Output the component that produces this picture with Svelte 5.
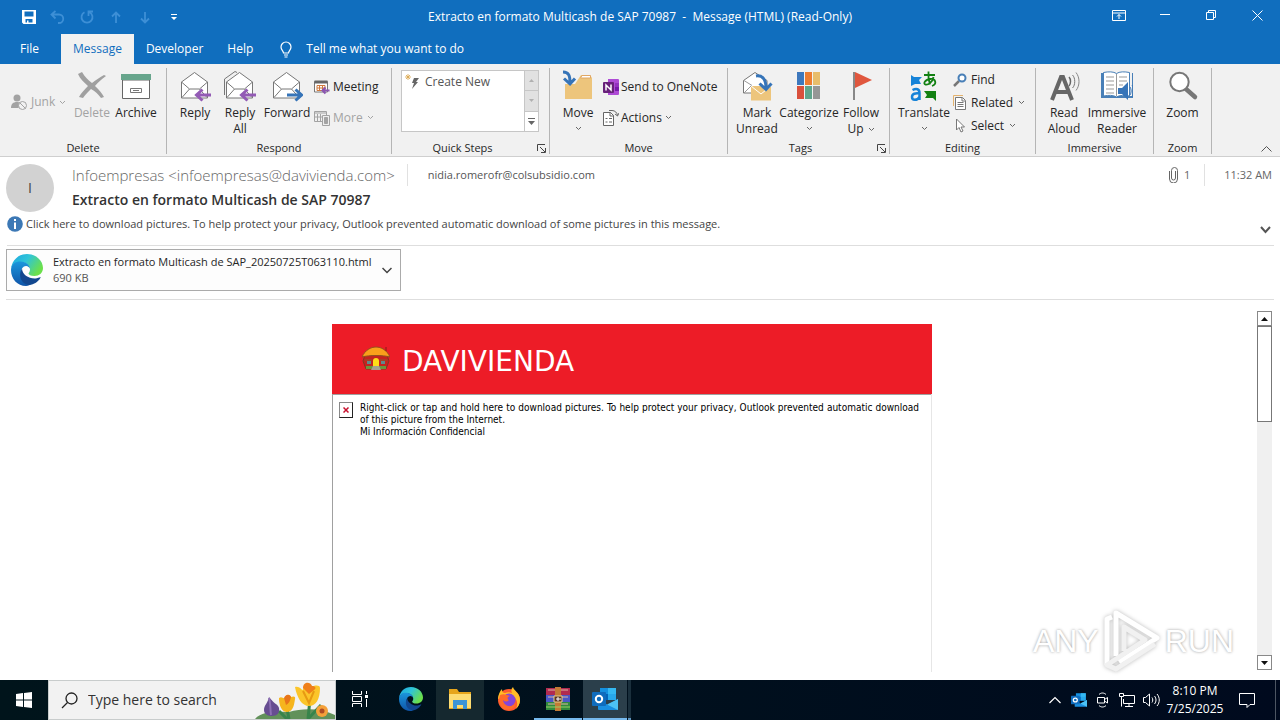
<script lang="ts">
	const tabs = ['File', 'Message', 'Developer', 'Help'];
	let activeTab = 'Message';
	let search = '';

	const subject = 'Extracto en formato Multicash de SAP 70987';
	const swatches = ['#3d78bd', '#ed7d31', '#e8bd6b', '#d9503c', '#5fa58c', '#969696'];
</script>

{#snippet caret()}
	<svg class="caret" width="7" height="5" viewBox="0 0 7 5" fill="none" stroke="currentColor">
		<path d="M1 1l2.500 2.500L6 1" />
	</svg>
{/snippet}

{#snippet envelope()}
	<path d="M2.500 28V12L15.500 2.500 28.500 12v16z" fill="#fff" stroke="#777" />
	<path d="M2.500 12l8 7h10l8-7M3 27.500l7.500-8.500M28 27.500L20.500 19" fill="none" stroke="#777" />
{/snippet}

{#snippet launcher()}
	<button class="launcher" aria-label="More options">
		<svg width="9" height="9" viewBox="0 0 9 9" fill="none" stroke="#444">
			<path d="M.5 7V.5H8M3 3l5 5M8.500 4v4.500H4" />
		</svg>
	</button>
{/snippet}

{#snippet edge(size, id)}
	<svg width={size} height={size} viewBox="0 0 32 32">
		<defs>
			<linearGradient id="{id}a" x1="0" y1="0" x2="1" y2=".5">
				<stop offset="0" stop-color="#1ba5e0" />
				<stop offset=".5" stop-color="#2fc4d8" />
				<stop offset="1" stop-color="#6be04b" />
			</linearGradient>
			<linearGradient id="{id}b" x1="0" y1="0" x2="0" y2="1">
				<stop offset="0" stop-color="#1b96dc" />
				<stop offset="1" stop-color="#0f54a8" />
			</linearGradient>
		</defs>
		<path d="M0 15C1 6 7.500 0 16 0c9.500 0 16 7 16 14 0 5-4 8-8.500 8-4 0-6-1.500-6-2.500 0-.8 1.500-1.500 1.500-4C19 11 14 8 10 8 5 8 1 11 0 15z" fill="url(#{id}a)" />
		<path d="M0 16C0 10 4.500 7.500 9.500 7.500c5 0 9 3 9.500 7-.5-1-2-2.500-4-2.500-3 0-5 3-5 7 0 6 5.500 10.500 11 10.500-2 1.500-3.500 2.500-6 2.500C6.500 32 0 25 0 16z" fill="url(#{id}b)" />
		<path d="M11 14.500c0 6 7 10.500 13.500 10 2-.2 3.500-1 5-1.500.7.6-3 6-8.500 7.500C13 33 5.500 24 11 14.500z" fill="#12478f" />
	</svg>
{/snippet}

{#snippet outlook(size)}
	<svg width={size} height={size} viewBox="0 0 26 26">
		<path d="M8 2h16v12H8z" fill="#1490df" />
		<path d="M16 2h8v6h-8z" fill="#35b8f1" />
		<path d="M8 8h8v6H8z" fill="#0364b8" />
		<path d="M16 8h8v6h-8z" fill="#28a8ea" />
		<path d="M6 13l10 6 10-6v10a1 1 0 0 1-1 1H7a1 1 0 0 1-1-1z" fill="#1a8fe0" />
		<path d="M26 13v11L15 18.500z" fill="#4cc2f5" />
		<rect y="6" width="14" height="14" rx="1" fill="#0f6cbd" />
		<circle cx="7" cy="13" r="3.200" fill="none" stroke="#fff" stroke-width="2" />
	</svg>
{/snippet}

<div class="window">
	<header>
		<div class="titlebar">
			<div class="quick-access">
				<button aria-label="Save">
					<svg width="14" height="14" viewBox="0 0 14 14">
						<path d="M0 0h14v14H1.500L0 12.500zM2.500 1.500v5h9v-5zM3.500 9v3.500H5V10.500h1.500v2h4V9z" fill="#fff" fill-rule="evenodd" />
					</svg>
				</button>
				<button class="faded" aria-label="Undo">
					<svg width="15" height="14" viewBox="0 0 15 14" fill="none" stroke="currentColor" stroke-width="1.800">
						<path d="M5.500 1L1.500 4.500l4 4M2 4.500h7a4.200 4.200 0 0 1 0 8.500H8" />
					</svg>
				</button>
				<button class="faded" aria-label="Redo">
					<svg width="14" height="14" viewBox="0 0 14 14" fill="none" stroke="currentColor" stroke-width="1.800">
						<path d="M4.500 2.200a5.500 5.500 0 1 0 5 0M8.500 6V1.500H13" />
					</svg>
				</button>
				<button class="faded" aria-label="Previous item">
					<svg width="10" height="13" viewBox="0 0 10 13" fill="none" stroke="currentColor" stroke-width="1.800">
						<path d="M5 12V2M1 5.500l4-4 4 4" />
					</svg>
				</button>
				<button class="faded" aria-label="Next item">
					<svg width="10" height="13" viewBox="0 0 10 13" fill="none" stroke="currentColor" stroke-width="1.800">
						<path d="M5 1v10M1 7.500l4 4 4-4" />
					</svg>
				</button>
				<button aria-label="Customize toolbar">
					<svg width="6" height="6" viewBox="0 0 6 6"><path d="M0 0h6v1H0zM0 3h6L3 6z" fill="#fff" /></svg>
				</button>
			</div>
			<h1>{subject}&nbsp; -&nbsp; Message (HTML) (Read-Only)</h1>
			<div class="window-controls">
				<button aria-label="Ribbon display options">
					<svg width="14" height="11" viewBox="0 0 14 11" fill="none" stroke="#fff">
						<path d="M.5.5h13v10H.5zM.5 3h13M7 9V4.500M5 6.500l2-2 2 2" />
					</svg>
				</button>
				<button aria-label="Minimize">
					<svg width="10" height="10" viewBox="0 0 10 10" stroke="#fff"><path d="M0 4.500h10" /></svg>
				</button>
				<button aria-label="Restore">
					<svg width="10" height="10" viewBox="0 0 10 10" fill="none" stroke="#fff">
						<path d="M.5 2.500h7v7h-7zM2.500 2V.5h7v7H8" />
					</svg>
				</button>
				<button aria-label="Close">
					<svg width="11" height="11" viewBox="0 0 11 11" stroke="#fff"><path d="M.5.5l10 10M10.500.5l-10 10" /></svg>
				</button>
			</div>
		</div>
		<nav>
			{#each tabs as tab}
				<button class="tab" class:active={tab === activeTab} on:click={() => (activeTab = tab)}>{tab}</button>
			{/each}
			<button class="tell-me">
				<svg width="12" height="17" viewBox="0 0 12 17" fill="none" stroke="#fff" stroke-width="1.200">
					<path d="M3.500 12c0-2-2.500-3-2.500-6a5 5 0 0 1 10 0c0 3-2.500 4-2.500 6zM4 14h4M4.500 16h3" />
				</svg>
				Tell me what you want to do
			</button>
		</nav>
	</header>

	<div class="ribbon">
		<section class="group delete">
			<div class="tools">
				<div class="stack">
					<button class="small" disabled>
						<svg width="17" height="17" viewBox="0 0 17 17">
							<circle cx="6" cy="4" r="3.500" fill="#a3a3a3" />
							<path d="M0 14c0-4 2-6 6-6 1.500 0 3 .5 4 1.500L7.500 14z" fill="#a3a3a3" />
							<circle cx="11.500" cy="11.500" r="4" fill="#f1f1f1" stroke="#a3a3a3" />
							<path d="M8.500 8.500l6 6" stroke="#a3a3a3" />
						</svg>
						Junk {@render caret()}
					</button>
				</div>
				<button class="big" disabled>
					<svg width="32" height="32" viewBox="0 0 32 32" fill="#a0a0a0">
						<path d="M2 4l4-2c3 5 6 8 10 11 4-3 8-6 12-8l2 1c-4 3-8 6-11 10 4 4 7 7 9 11l-3 1c-3-4-6-7-10-9-3 3-6 6-8 9l-4-1c2-4 6-8 9-11C8 12 4 9 2 4z" />
					</svg>
					Delete
				</button>
				<button class="big">
					<svg width="32" height="32" viewBox="0 0 32 32">
						<path d="M2.500 10h27v18.500h-27z" fill="#fff" stroke="#666" />
						<path d="M1 4h30v6H1z" fill="#67a58c" />
						<path d="M10.500 18.500h11v4h-11zM13 20.500h6" fill="none" stroke="#777" />
					</svg>
					Archive
				</button>
			</div>
			<footer><h2>Delete</h2></footer>
		</section>

		<section class="group respond">
			<div class="tools">
				<button class="big">
					<svg width="32" height="32" viewBox="0 0 32 32">
						{@render envelope()}
						<path d="M32 25H18M23.500 19.500L17.500 25l6 5.500" fill="none" stroke="#935bb5" stroke-width="3" />
					</svg>
					Reply
				</button>
				<button class="big">
					<svg width="32" height="32" viewBox="0 0 32 32">
						<path d="M.5 25V9L11 1.500l2 1" fill="none" stroke="#777" />
						{@render envelope()}
						<path d="M32 25H18M23.500 19.500L17.500 25l6 5.500" fill="none" stroke="#935bb5" stroke-width="3" />
					</svg>
					Reply<br />All
				</button>
				<button class="big">
					<svg width="32" height="32" viewBox="0 0 32 32">
						{@render envelope()}
						<path d="M16 25h14M24.500 19.500l6 5.500-6 5.500" fill="none" stroke="#3674b8" stroke-width="3" />
					</svg>
					Forward
				</button>
				<div class="stack">
					<button class="small">
						<svg width="16" height="16" viewBox="0 0 16 16" fill="none">
							<path d="M.5 2.500h13V13H.5z" fill="#fff" stroke="#777" />
							<path d="M.5 1.500h13v3H.5z" fill="#666" />
							<path d="M3 6.500h8v5H3zM5.500 6v6M8.500 6v6M3 9h8" stroke="#d0793c" />
							<path d="M15.500 11.500H9M11.500 8.500l-3 3 3 3" stroke="#8b55b0" stroke-width="2" />
						</svg>
						Meeting
					</button>
					<button class="small" disabled>
						<svg width="16" height="16" viewBox="0 0 16 16" fill="none" stroke="#a3a3a3">
							<path d="M.5 1.500h12v10H.5zM.5 3h12M3.500 4v7M6.500 4v7M1 7h7" />
							<path d="M8.500 5.500h7v10h-7z" fill="#eee" />
							<path d="M10.500 7.500h3v6h-3z" fill="#a3a3a3" />
						</svg>
						More {@render caret()}
					</button>
				</div>
			</div>
			<footer><h2>Respond</h2></footer>
		</section>

		<section class="group steps">
			<div class="gallery">
				<button class="step">
					<svg width="16" height="16" viewBox="0 0 16 16">
						<path d="M9 4h5l-3 4h2l-6 7 2-6H7z" fill="#666" />
						<path d="M3 0v6M0 3h6M1 1l4 4M5 1L1 5" stroke="#d9a348" stroke-width=".8" />
					</svg>
					Create New
				</button>
				<div class="spinner">
					<button disabled aria-label="Scroll up">
						<svg width="5" height="3" viewBox="0 0 5 3"><path d="M0 3l2.500-3L5 3z" fill="#b0b0b0" /></svg>
					</button>
					<button disabled aria-label="Scroll down">
						<svg width="5" height="3" viewBox="0 0 5 3"><path d="M0 0l2.500 3L5 0z" fill="#b0b0b0" /></svg>
					</button>
					<button aria-label="More quick steps">
						<svg width="7" height="7" viewBox="0 0 7 7"><path d="M0 0h7v1H0zM0 3h7L3.500 7z" fill="#666" /></svg>
					</button>
				</div>
			</div>
			<footer><h2>Quick Steps</h2>{@render launcher()}</footer>
		</section>

		<section class="group move">
			<div class="tools">
				<button class="big">
					<svg width="32" height="32" viewBox="0 0 32 32">
						<path d="M3 14h10l6-9h9l2 3v21H3z" fill="#edc57c" />
						<path d="M20 5.500h8.500v2.500H18.500z" fill="#fff" stroke="#e0a765" />
						<path d="M1 2c6 0 7 4 7 11M2 8.500L8 14l5-5.500" fill="none" stroke="#3674b8" stroke-width="3" />
					</svg>
					Move {@render caret()}
				</button>
				<div class="stack">
					<button class="small">
						<svg width="16" height="16" viewBox="0 0 16 16">
							<path d="M5 0h10a1 1 0 0 1 1 1v14a1 1 0 0 1-1 1H5z" fill="#ae4bd5" />
							<path d="M12 4h4v4h-4z" fill="#9332bf" />
							<path d="M12 8h4v4h-4z" fill="#7719aa" />
							<rect y="3" width="11" height="11" rx="1" fill="#68217a" />
							<path d="M3 11.500V6l5 5V5.500" fill="none" stroke="#fff" stroke-width="1.500" />
						</svg>
						Send to OneNote
					</button>
					<button class="small">
						<svg width="16" height="16" viewBox="0 0 16 16" fill="none" stroke="#666">
							<path d="M.5 2.500h7l3 3v10H.5z" fill="#fff" />
							<path d="M2.500 8.500h2M6 8.500h3M2.500 12h2M6 12h3M7 2v4h4M6 .500h3c3 0 5 2 5.500 5M12 4l2.500 2L16 3" />
						</svg>
						Actions {@render caret()}
					</button>
				</div>
			</div>
			<footer><h2>Move</h2></footer>
		</section>

		<section class="group tags">
			<div class="tools">
				<button class="big">
					<svg width="32" height="32" viewBox="0 0 32 32">
						<path d="M2.500 23V10.500L14 2.500l12 8V23z" fill="#fff" stroke="#777" />
						<path d="M3 23l7-7M3 10.500l8 5" stroke="#999" />
						<path d="M10 16h20v14.500H10z" fill="#edc57c" />
						<path d="M10 16l10 8 10-8" fill="none" stroke="#fff" />
						<path d="M15 6c7-1 10 4 10 12M18.500 13.500l6.500 6 5.500-6" fill="none" stroke="#3674b8" stroke-width="3" />
					</svg>
					Mark<br />Unread
				</button>
				<button class="big">
					<svg width="32" height="32" viewBox="0 0 32 32">
						{#each swatches as color, i}
							<rect x={4 + (i % 3) * 8} y={2 + Math.floor(i / 3) * 14} width="7" height="13" fill={color} />
						{/each}
					</svg>
					Categorize {@render caret()}
				</button>
				<button class="big">
					<svg width="32" height="32" viewBox="0 0 32 32">
						<path d="M8 2h2v28H8z" fill="#888" />
						<path d="M10 2l17 8-17 8z" fill="#e0573e" />
					</svg>
					<span>Follow<br />Up {@render caret()}</span>
				</button>
			</div>
			<footer><h2>Tags</h2>{@render launcher()}</footer>
		</section>

		<section class="group editing">
			<div class="tools">
				<button class="big">
					<svg width="32" height="32" viewBox="0 0 32 32" fill="none">
						<path d="M3 5l3 2h8l-3 3 2 4H7l-4 2z" fill="#1683d8" />
						<path d="M16 21h12v10l-3-3h-8l2-3z" fill="#128012" />
						<path d="M4.500 20c4-2 7-1 7 3v7M11.500 23.500c-4-.5-7.500 0-7.500 3.500s5 4 7.500 0" stroke="#1683d8" stroke-width="2.500" />
						<path d="M16 5h11M20.500 1.500c-.5 6 0 9 1.500 13M25.500 7c-1 5-5 8-8 7.500-2.500-.5-1-5 5-5.500 5-.5 7 5 1.500 7" stroke="#128012" stroke-width="1.800" />
					</svg>
					Translate {@render caret()}
				</button>
				<div class="stack">
					<button class="small">
						<svg width="14" height="14" viewBox="0 0 14 14" fill="none">
							<path d="M1 13l5-5" stroke="#777" stroke-width="2.500" />
							<circle cx="9" cy="5" r="3.500" fill="#fff" stroke="#487fb7" stroke-width="2" />
						</svg>
						Find
					</button>
					<button class="small">
						<svg width="14" height="15" viewBox="0 0 14 15" fill="none">
							<path d="M.5 11V.5H10" stroke="#e4b36e" />
							<path d="M2.500 2.500h7l3 3v9h-10z" fill="#fff" stroke="#777" />
							<path d="M4.500 7.500h6M4.500 9.500h6M4.500 11.500h6M9 3v3h3" stroke="#777" />
						</svg>
						Related {@render caret()}
					</button>
					<button class="small">
						<svg width="14" height="15" viewBox="0 0 14 15">
							<path d="M3.500 1v11L6 9.500 8 14l2-1-2-4h3.500z" fill="#fff" stroke="#777" />
						</svg>
						Select {@render caret()}
					</button>
				</div>
			</div>
			<footer><h2>Editing</h2></footer>
		</section>

		<section class="group immersive">
			<div class="tools">
				<button class="big">
					<svg width="32" height="32" viewBox="0 0 32 32" fill="none" stroke="#666">
						<path d="M4 30L13 7h2l9 23M8 22h12" stroke-width="4" />
						<path d="M21 7c2 2 2 7 0 9" stroke-width="1.500" />
						<path d="M24.500 5c3 3 3 10 0 13" stroke="#777" />
						<path d="M28 2.500c4 5 4 13 0 18" stroke="#888" />
					</svg>
					Read<br />Aloud
				</button>
				<button class="big">
					<svg width="32" height="32" viewBox="0 0 32 32">
						<path d="M0 3h3v23h28V3h1v25H0z" fill="#487fb7" />
						<path d="M2.500 2.500c5-1 10-1 13 1 3-2 8-2 13-1V26c-5-1-10-1-13 1-3-2-8-2-13-1z" fill="#fff" stroke="#487fb7" />
						<path d="M5 7h8M5 11h8M5 15h8M5 19h8M5 23h8M18 7h8M18 11h8M18 15h4M15.500 4v22" stroke="#999" />
						<path d="M17 18h4l6-6v18l-6-6h-4z" fill="#3674b8" />
						<path d="M29 17c1.500 2 1.500 6 0 8M31 15c2 3 2 9 0 12" fill="none" stroke="#3674b8" />
					</svg>
					Immersive<br />Reader
				</button>
			</div>
			<footer><h2>Immersive</h2></footer>
		</section>

		<section class="group zoom">
			<div class="tools">
				<button class="big">
					<svg width="32" height="32" viewBox="0 0 32 32">
						<path d="M19 19l9 8" stroke="#777" stroke-width="4.500" stroke-linecap="round" />
						<circle cx="12.500" cy="12" r="9.200" fill="#fff" stroke="#777" stroke-width="2" />
					</svg>
					Zoom
				</button>
			</div>
			<footer><h2>Zoom</h2></footer>
		</section>

		<button class="collapse" aria-label="Collapse the ribbon">
			<svg width="11" height="6" viewBox="0 0 11 6" fill="none" stroke="#555"><path d="M.5 5.500l5-5 5 5" /></svg>
		</button>
	</div>

	<main>
		<div class="message-header">
			<div class="avatar">I</div>
			<div class="who">
				<div class="from">
					<span class="sender">Infoempresas &lt;infoempresas@davivienda.com&gt;</span>
					<span class="recipient">nidia.romerofr@colsubsidio.com</span>
				</div>
				<h3>{subject}</h3>
			</div>
			<div class="meta">
				<svg width="9" height="16" viewBox="0 0 9 16" fill="none" stroke="#666">
					<path d="M6.500 4v7a2 2 0 0 1-4 0V3.500a2.800 2.800 0 0 1 6 0V12a4 4 0 0 1-8 0V4" />
				</svg>
				<span>1</span>
				<time>11:32 AM</time>
			</div>
		</div>
		<div class="info-row">
			<button class="info">
				<svg width="16" height="16" viewBox="0 0 16 16">
					<circle cx="8" cy="8" r="7.800" fill="#3c78b5" />
					<path d="M7 6.500h2V13H7zM7 3h2v2H7z" fill="#fff" />
				</svg>
				Click here to download pictures. To help protect your privacy, Outlook prevented automatic download of some pictures in this message.
			</button>
			<button class="expand" aria-label="Expand header">
				<svg width="11" height="8" viewBox="0 0 11 8" fill="none" stroke="#555" stroke-width="2"><path d="M1 1l4.500 5L10 1" /></svg>
			</button>
		</div>

		<div class="attachments">
			<button class="attachment">
				{@render edge(32, 'file')}
				<span class="file">Extracto en formato Multicash de SAP_20250725T063110.html<small>690 KB</small></span>
				<svg width="10" height="7" viewBox="0 0 10 7" fill="none" stroke="#444" stroke-width="1.500"><path d="M.5 1L5 5.500 9.500 1" /></svg>
			</button>
		</div>

		<div class="reading">
			<article>
				<div class="banner">
					<svg width="28" height="26" viewBox="0 0 28 26">
						<path d="M3 9h22l2 6-3 8H4l-3-8z" fill="#c5221f" stroke="#7c3a22" />
						<path d="M0 11C3 4 9 1 14 1s11 3 14 10c-7-2-21-2-28 0z" fill="#f9a01b" stroke="#934f1d" />
						<path d="M24 1v4" stroke="#8a1a1a" />
						<path d="M3 14h7M18 14h7" stroke="#8a5a2a" />
						<path d="M5 15h4v3H5zM19 15h4v3h-4z" fill="#5f8a8c" />
						<path d="M11 20v-5a3 3 0 0 1 6 0v5z" fill="#ffdd19" />
						<path d="M4 21.500h7M17 21.500h7" stroke="#6c953c" stroke-width="3" />
						<path d="M11 20h6l2 4H9z" fill="#a6a093" />
					</svg>
					<span>DAVIVIENDA</span>
				</div>
				<div class="blocked">
					<span class="broken">
						<svg width="6" height="6" viewBox="0 0 6 6" stroke="#c8102e" stroke-width="1.500"><path d="M.5.5l5 5M5.500.5l-5 5" /></svg>
					</span>
					<p>
						Right-click or tap and hold here to download pictures. To help protect your privacy, Outlook prevented
						automatic download of this picture from the Internet.<br />Mi Información Confidencial
					</p>
				</div>
			</article>
			<div class="scrollbar">
				<button aria-label="Scroll message up">
					<svg width="7" height="4" viewBox="0 0 7 4"><path d="M0 4l3.500-4L7 4z" fill="#111" /></svg>
				</button>
				<div class="thumb"></div>
				<button aria-label="Scroll message down">
					<svg width="7" height="4" viewBox="0 0 7 4"><path d="M0 0l3.500 4L7 0z" fill="#111" /></svg>
				</button>
			</div>
			<div class="watermark">
				<span>ANY</span>
				<svg width="58" height="64" viewBox="0 0 58 64" fill="none" stroke="#fff" stroke-width="5" stroke-linejoin="round">
					<path d="M4 56V10l5-2M13 47V4l41 25-38 24" />
					<path d="M21 42V18l21 13-38 25 9 4 39-25" stroke="#f1f1f1" />
				</svg>
				<span>RUN</span>
			</div>
		</div>
	</main>

	<div class="taskbar">
		<button class="start" aria-label="Start">
			<svg width="16" height="16" viewBox="0 0 16 16" fill="#fff">
				<path d="M0 2l7-1v6.500H0zM8 1l8-1v7.500H8zM0 8.500h7V15l-7-1zM8 8.500h8V16l-8-1z" />
			</svg>
		</button>
		<label class="search">
			<svg width="17" height="17" viewBox="0 0 17 17" fill="none" stroke="#222" stroke-width="1.300">
				<circle cx="10.500" cy="6.500" r="5.500" />
				<path d="M6.500 10.500L1 16" />
			</svg>
			<input type="text" placeholder="Type here to search" aria-label="Type here to search" bind:value={search} />
			<svg class="flowers" width="80" height="38" viewBox="0 0 80 38">
				<path d="M0 38c8-9 24-7 34-7 14-4 32-4 46 3v4z" fill="#62915a" />
				<path d="M34 38l-3-16M53 38l2-20M53 38l13-14M32 38l-8-8" stroke="#38844b" stroke-width="3" />
				<path d="M14 16c-1 6-5 8-5 13 0 4 4 6 8 6 5 0 8-3 7-8-1-4-4-3-10-11z" fill="#674d91" />
				<path d="M14 17c2 6 1 11 2 17" stroke="#8d70b4" stroke-width="2" />
				<path d="M24 17c3-2 4 1 6 0 1-4 5-4 6-1 2-1 5-1 4 2-1 8-3 13-8 13s-8-6-8-14z" fill="#f6b51d" />
				<path d="M29 17c1-3 5-5 7-1-1 5-3 7-5 8z" fill="#e8751a" />
				<path d="M40 6c5-1 6 3 8 3 0-6 7-7 9-3 3-2 8-2 8 1 0 11-4 18-11 18S42 17 40 6z" fill="#fbc52a" />
				<path d="M48 7c0-6 7-7 9-2 3 0 5 2 2 4l-5 4z" fill="#ef7f1a" />
				<path d="M48 10l6 12 5-12" fill="none" stroke="#e79a12" stroke-width="2" />
				<circle cx="67" cy="30" r="6" fill="#f5a13a" />
				<circle cx="67" cy="30" r="2.500" fill="#b04c24" />
			</svg>
		</label>
		<div class="apps">
			<button class="task-view" aria-label="Task View">
				<svg width="18" height="16" viewBox="0 0 18 16" fill="none" stroke="#fff">
					<path d="M1.500 0v3.500h9V0M1.500 16v-3.500h9V16M1.500 5.500h9v5h-9zM15.500 0v3M15.500 8v8" />
					<path d="M14 4h3v3h-3z" fill="#fff" stroke="none" />
				</svg>
			</button>
			<button aria-label="Microsoft Edge">{@render edge(24, 'task')}</button>
			<button class="open" aria-label="File Explorer">
				<svg width="24" height="22" viewBox="0 0 24 22">
					<path d="M1 1h8l2 3h12v17H1z" fill="#e6a51b" />
					<path d="M1 6h22v14H1z" fill="#fddc72" />
					<path d="M5 21v-9h14v9h-4v-4H9v4z" fill="#3c94d6" />
				</svg>
			</button>
			<button aria-label="Firefox">
				<svg width="24" height="24" viewBox="0 0 24 24">
					<circle cx="12" cy="13" r="11" fill="#ff5b2d" />
					<path d="M1 12C1 8 3 4 5 2c0 3 1 4 3 4 2-1 5-1 7 0-1-2-1-4 1-6 1 4 7 6 7 13 0 4-2 7-4 9C23 13 16 8 12 8z" fill="#ffbd27" />
					<circle cx="12" cy="13" r="6.500" fill="#8446d8" />
					<path d="M3 8c4-2 7 0 10 1-3 1-3 3-1 4-2 2-4 2-6 0 1 7 9 8 13 3-1 6-7 8-12 6-4-2-6-9-4-14z" fill="#ff6b29" />
				</svg>
			</button>
			<button class="running" aria-label="WinRAR">
				<svg width="24" height="24" viewBox="0 0 24 24">
					<path d="M0 1h24v7H0z" fill="#b12b50" />
					<path d="M0 8h24v7H0z" fill="#4a57c8" />
					<path d="M0 15h24v8H0z" fill="#2f8a3e" />
					<path d="M2 3h20M2 10h20M2 17h20" stroke="#ddb5a1" />
					<path d="M9 0h6v24H9z" fill="#c27a35" />
					<path d="M0 20h24" stroke="#9bce62" />
					<path d="M8 9h8v6H8z" fill="#583323" stroke="#e8d08c" />
					<path d="M10 12h5M12 10v4" stroke="#fff" />
				</svg>
			</button>
			<button class="open running" aria-label="Outlook">{@render outlook(26)}</button>
			<i class="stacked"></i>
		</div>
		<div class="tray">
			<button aria-label="Show hidden icons">
				<svg width="12" height="8" viewBox="0 0 12 8" fill="none" stroke="#fff" stroke-width="1.200"><path d="M.5 7L6 1.500 11.500 7" /></svg>
			</button>
			<button aria-label="Outlook notifications">{@render outlook(16)}</button>
			<button aria-label="Meet Now">
				<svg width="12" height="16" viewBox="0 0 12 16" fill="none" stroke="#fff">
					<path d="M.5 5.500h7v5.500h-7zM7.500 7.500l3-2V11l-3-2M2 2.500c2-2 5-2 7 0M2 13.500c2 2 5 2 7 0" />
				</svg>
			</button>
			<button aria-label="Network">
				<svg width="16" height="14" viewBox="0 0 16 14" fill="none" stroke="#fff">
					<path d="M5 2.500h10.500v8H4.500V6M10 10.500v3M6 13.500h8M.5.500h4v3h-4zM2.500 4v9.500" />
				</svg>
			</button>
			<button aria-label="Volume">
				<svg width="17" height="14" viewBox="0 0 17 14" fill="none" stroke="#fff">
					<path d="M.5 4.500h2l4-3.500v12L2.500 9.500h-2zM9 4.500c1 1.500 1 3.500 0 5M11.500 3c2 2.500 2 5.500 0 8M14 1c3 3.500 3 8.500 0 12" />
				</svg>
			</button>
			<time class="clock">8:10 PM<br />7/25/2025</time>
			<button class="notify" aria-label="Notifications">
				<svg width="16" height="16" viewBox="0 0 16 16" fill="none" stroke="#fff"><path d="M.5 1.500h15v11H11l-3 3v-3H.5z" /></svg>
			</button>
			<i class="show-desktop"></i>
		</div>
	</div>
</div>

<style>
	:global(body) {
		margin: 0;
	}

	.window {
		display: flex;
		flex-direction: column;
		min-height: 100vh;
		background: #fff;
		color: #262626;
		font: 12px/16px 'Open Sans', 'Noto Sans', sans-serif;
	}

	* {
		box-sizing: border-box;
	}

	button {
		display: flex;
		align-items: center;
		padding: 0;
		border: 0;
		background: none;
		color: inherit;
		font: inherit;
		white-space: nowrap;
	}

	button:disabled {
		color: #a3a3a3;
	}

	svg {
		flex: none;
	}

	h1,
	h2,
	h3,
	p {
		margin: 0;
		font-size: inherit;
		font-weight: 400;
	}

	/* title bar and tabs */
	header {
		background: #106ebe;
		color: #fff;
	}

	.titlebar {
		display: grid;
		grid-template-columns: 1fr auto 1fr;
		align-items: center;
		height: 34px;
	}

	.quick-access {
		display: flex;
		padding-left: 14px;
	}

	.quick-access button {
		justify-content: center;
		width: 29px;
		height: 30px;
	}

	.quick-access .faded {
		color: #3d8fd6;
	}

	.window-controls {
		display: flex;
		justify-content: flex-end;
	}

	.window-controls button {
		justify-content: center;
		width: 46px;
		height: 34px;
		padding-bottom: 4px;
	}

	nav {
		display: flex;
		height: 30px;
		padding-left: 8px;
	}

	.tab {
		padding: 0 12px;
	}

	.tab:first-child {
		margin-right: 10px;
	}

	.tab.active {
		background: #f1f1f1;
		color: #106ebe;
	}

	.tell-me {
		gap: 14px;
		margin-left: 15px;
	}

	/* ribbon */
	.ribbon {
		display: flex;
		height: 93px;
		padding: 4px 0 2px;
		border-bottom: 1px solid #cfcfcf;
		background: #f1f1f1;
	}

	.group {
		display: flex;
		flex-direction: column;
		flex: none;
		border-right: 1px solid #b5b5b5;
	}

	.tools {
		display: grid;
		flex: none;
		height: 72px;
		padding: 0 5px;
	}

	.delete {
		width: 167px;
	}

	.delete .tools {
		grid-template-columns: 67px 40px 48px;
	}

	.respond {
		width: 225px;
	}

	.respond .tools {
		grid-template-columns: 46px 44px 50px 1fr;
	}

	.steps {
		width: 158px;
	}

	.move {
		width: 178px;
	}

	.move .tools {
		grid-template-columns: 46px 1fr;
	}

	.tags {
		width: 162px;
	}

	.tags .tools {
		grid-template-columns: 48px 56px 48px;
	}

	.editing {
		width: 146px;
	}

	.editing .tools {
		grid-template-columns: 58px 1fr;
	}

	.immersive {
		width: 118px;
	}

	.immersive .tools {
		grid-template-columns: 46px 60px;
	}

	.zoom {
		width: 58px;
	}

	.big {
		flex-direction: column;
		align-items: center;
		justify-content: flex-start;
		padding-top: 2px;
		text-align: center;
	}

	.big > svg:first-child {
		margin-bottom: 3px;
	}

	.big > .caret {
		margin-top: 5px;
	}

	.caret {
		color: #666;
	}

	:disabled .caret {
		color: #a3a3a3;
	}

	.big span .caret,
	.small .caret {
		margin-left: 1px;
		vertical-align: middle;
	}

	.stack {
		display: flex;
		flex-direction: column;
		align-items: flex-start;
		justify-content: space-around;
		padding: 0 0 4px;
	}

	.delete .stack {
		padding-left: 6px;
	}

	.respond .stack,
	.move .stack {
		justify-content: center;
		gap: 8px;
		padding: 0 0 4px 2px;
	}

	.small {
		gap: 3px;
		height: 23px;
	}

	.move .small {
		gap: 2px;
	}

	.editing .small {
		gap: 4px;
	}

	.group footer {
		display: flex;
		align-items: center;
		height: 16px;
	}

	.group h2 {
		flex: 1;
		font-size: 11px;
		text-align: center;
	}

	.launcher {
		width: 16px;
		justify-content: center;
	}

	.gallery {
		display: flex;
		flex: none;
		height: 62px;
		margin: 2px 10px 8px 9px;
		border: 1px solid #c6c6c6;
		background: #fff;
	}

	.step {
		flex: 1;
		align-self: flex-start;
		gap: 4px;
		height: 22px;
		padding-left: 3px;
		color: #555;
	}

	.spinner {
		display: flex;
		flex-direction: column;
		width: 14px;
		border-left: 1px solid #c6c6c6;
	}

	.spinner button {
		flex: 1;
		justify-content: center;
	}

	.spinner button:disabled {
		border-bottom: 1px solid #c6c6c6;
		background: #e1e1e1;
	}

	.collapse {
		align-self: flex-end;
		margin: 0 8px 2px auto;
	}

	/* message header */
	main {
		display: flex;
		flex: 1;
		flex-direction: column;
	}

	.message-header {
		display: flex;
		gap: 18px;
		padding: 7px 8px 0 6px;
	}

	.avatar {
		flex: none;
		width: 48px;
		height: 48px;
		border-radius: 50%;
		background: #d2d2d2;
		color: #444;
		font-size: 14px;
		line-height: 48px;
		text-align: center;
	}

	.who {
		flex: 1;
	}

	.from,
	.meta {
		display: flex;
		align-items: center;
		height: 22px;
		color: #555;
	}

	.sender {
		color: #666;
		font-size: 15px;
		font-weight: 300;
	}

	.recipient {
		margin-left: 12px;
		padding: 3px 0 3px 20px;
		border-left: 1px solid #e1e1e1;
		font-size: 11px;
	}

	h3 {
		color: #333;
		font-size: 14px;
		font-weight: 600;
		line-height: 28px;
	}

	.meta {
		gap: 6px;
		color: #666;
		font-size: 11px;
	}

	.meta time {
		margin-left: 8px;
		padding: 3px 0 3px 19px;
		border-left: 1px solid #e1e1e1;
	}

	.info-row {
		display: flex;
		justify-content: space-between;
		height: 32px;
		margin: 0 6px 0 7px;
		border-bottom: 1px solid #dedede;
	}

	.info {
		gap: 3px;
		height: 20px;
		font-size: 11px;
		color: #444;
	}

	.expand {
		align-self: center;
		margin-right: 3px;
	}

	.attachments {
		height: 54px;
		margin: 0 6px;
		padding-top: 3px;
		border-bottom: 1px solid #dedede;
	}

	.attachment {
		gap: 10px;
		height: 42px;
		padding: 0 8px 0 4px;
		border: 1px solid #ababab;
		background: #fdfdfd;
		font-size: 11px;
	}

	.file {
		text-align: left;
	}

	.file small {
		display: block;
		color: #555;
		font-size: 11px;
	}

	/* message body */
	.reading {
		position: relative;
		display: flex;
		flex: 1;
		padding: 11px 8px 10px 7px;
	}

	article {
		width: 600px;
		margin: 13px auto -2px;
		border: solid #e6e6e6;
		border-width: 0 1px;
		border-left-color: #a0a0a0;
	}

	.banner {
		display: flex;
		align-items: center;
		gap: 12px;
		height: 70px;
		margin: 0 -1px;
		padding-left: 30px;
		background: #ed1c27;
		color: #fff;
		font: 28px/32px 'DejaVu Sans', sans-serif;
	}

	.banner span {
		padding-top: 6px;
	}

	.blocked {
		display: flex;
		gap: 7px;
		padding: 7px 12px 0 6px;
		border-top: 1px solid #a0a0a0;
		color: #000;
		font: 10px/12px 'DejaVu Sans Condensed', 'DejaVu Sans', sans-serif;
		text-align: justify;
	}

	.broken {
		display: flex;
		flex: none;
		align-items: center;
		justify-content: center;
		width: 14px;
		height: 16px;
		border: 1px solid #888;
		border-right-color: #222;
		border-bottom-color: #222;
	}

	.scrollbar {
		display: flex;
		flex-direction: column;
		width: 15px;
		background: #f0f0f0;
	}

	.scrollbar button {
		justify-content: center;
		height: 15px;
		border: 1px solid #888;
		background: #fff;
	}

	.scrollbar button:last-child {
		margin-top: auto;
	}

	.thumb {
		height: 96px;
		border: 1px solid #777;
		background: #fff;
	}

	.watermark {
		position: absolute;
		right: 46px;
		bottom: 7px;
		display: flex;
		align-items: center;
		gap: 4px;
		color: #fff;
		font: 32px/44px 'Liberation Sans', sans-serif;
		text-shadow: 0 0 3px #999;
	}

	.watermark svg {
		filter: drop-shadow(0 0 2px #bbb);
	}

	/* taskbar */
	.taskbar {
		display: flex;
		height: 40px;
		background: linear-gradient(90deg, #00141b, #00101d 50%, #000a1e);
		color: #fff;
	}

	.start {
		justify-content: center;
		width: 48px;
	}

	.search {
		display: flex;
		align-items: center;
		width: 288px;
		padding-left: 12px;
		border: 1px solid #c8cccc;
		background: #f2f2f2;
	}

	.search input {
		flex: 1;
		min-width: 0;
		padding: 0 0 0 10px;
		border: 0;
		outline: 0;
		background: none;
		color: #333;
		font: 14px/20px 'Open Sans', 'Noto Sans', sans-serif;
	}

	.search input::placeholder {
		color: #333;
		opacity: 1;
	}

	.flowers {
		align-self: flex-end;
	}

	.apps {
		display: flex;
		gap: 1px;
	}

	.apps button {
		justify-content: center;
		width: 48px;
		border-bottom: 2px solid transparent;
	}

	.apps .task-view {
		margin-right: 2px;
	}

	.apps .open {
		background: #15282f;
	}

	.apps .running {
		border-bottom-color: #76b9ed;
	}

	.apps .open.running {
		width: 44px;
		background: #2b3f4b;
	}

	.stacked {
		width: 3px;
		border-bottom: 2px solid #5f97c3;
		background: #1a2f3c;
	}

	.tray {
		display: flex;
		align-items: center;
		margin-left: auto;
	}

	.tray button {
		justify-content: center;
		width: 24px;
		height: 40px;
	}

	.clock {
		width: 64px;
		line-height: 18px;
		text-align: center;
	}

	.tray .notify {
		width: 40px;
	}

	.show-desktop {
		align-self: stretch;
		width: 5px;
		margin-left: 8px;
		border-left: 1px solid #4d5663;
	}
</style>
